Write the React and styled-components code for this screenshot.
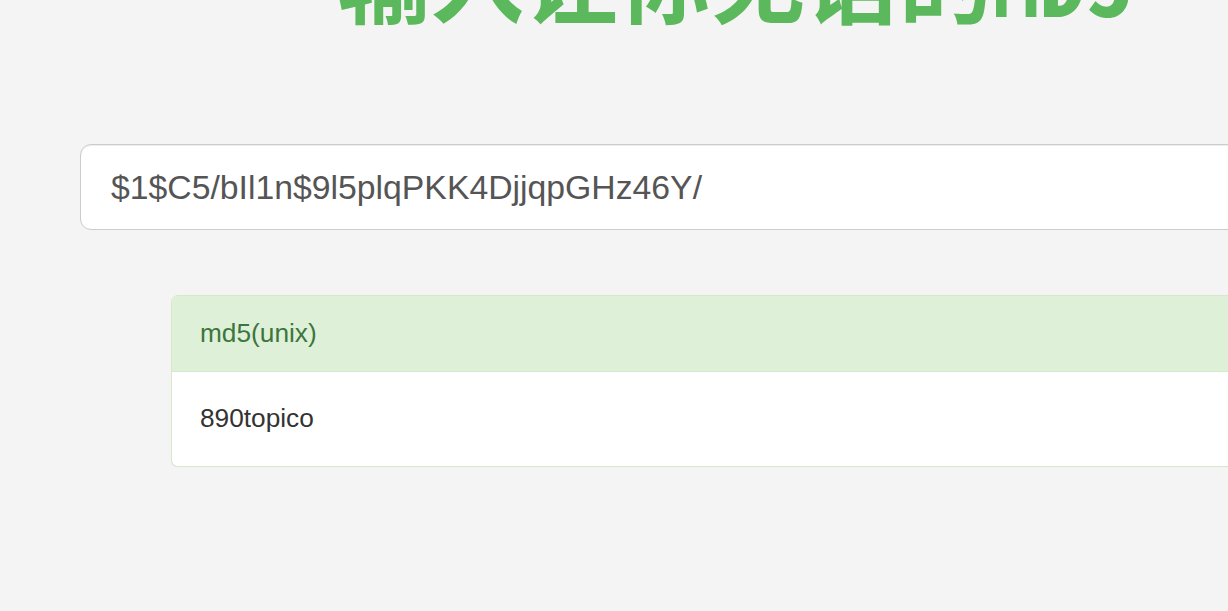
import styled, { createGlobalStyle } from "styled-components";

const GlobalStyle = createGlobalStyle`
  html, body {
    margin: 0;
    padding: 0;
    background: #f4f4f4;
    overflow: hidden;
  }
  body {
    font-family: "Liberation Sans", Arial, sans-serif;
  }
`;

const Page = styled.div`
  width: 1470px;
  padding: 0 80px;
  box-sizing: border-box;
`;

const Title = styled.h1`
  margin: -75px 0 0;
  text-align: center;
  font-family: "Noto Sans CJK SC", sans-serif;
  font-weight: 700;
  font-size: 93.75px;
  line-height: 1.1;
  color: #5cb85c;
  font-feature-settings: "hwid";
`;

const HashInput = styled.input`
  display: block;
  width: 100%;
  height: 86px;
  margin-top: 116px;
  padding: 18px 30px;
  box-sizing: border-box;
  border: 1px solid #cccccc;
  border-radius: 11px;
  background: #ffffff;
  box-shadow: inset 0 1px 1px rgba(0, 0, 0, 0.075);
  font-family: "Liberation Sans", Arial, sans-serif;
  font-size: 33.75px;
  color: #555555;
  outline: none;
`;

const Results = styled.div`
  margin: 65px 91px 0 91px;
`;

const Panel = styled.div`
  border: 1px solid #d6e9c6;
  border-radius: 7px;
  background: #ffffff;
  overflow: hidden;
  box-shadow: 0 1px 1px rgba(0, 0, 0, 0.05);
`;

const PanelHeading = styled.div`
  padding: 18.75px 28px;
  background: #dff0d8;
  border-bottom: 1px solid #d6e9c6;
  color: #3c763d;
  font-size: 26.25px;
  line-height: 37.5px;
`;

const PanelBody = styled.div`
  padding: 28px;
  color: #333333;
  font-size: 26.25px;
  line-height: 37.5px;
`;

export default function App() {
  return (
    <>
      <GlobalStyle />
      <Page>
        <Title>输入让你无语的MD5</Title>
        <HashInput defaultValue="$1$C5/bIl1n$9l5plqPKK4DjjqpGHz46Y/" />
        <Results>
          <Panel>
            <PanelHeading>md5(unix)</PanelHeading>
            <PanelBody>890topico</PanelBody>
          </Panel>
        </Results>
      </Page>
    </>
  );
}
